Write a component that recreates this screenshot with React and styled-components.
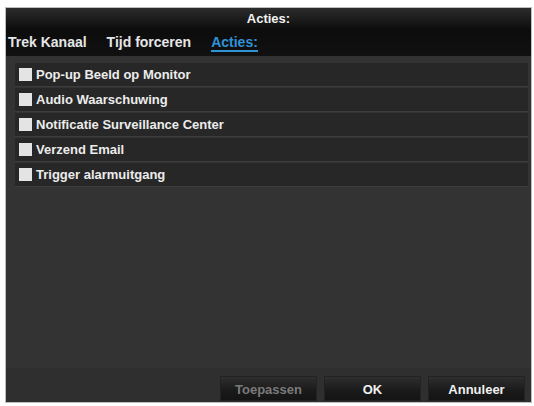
import styled, { createGlobalStyle } from 'styled-components'

const Global = createGlobalStyle`
    html, body {
        margin: 0;
        padding: 0;
        background: #ffffff;
        font-family: "Liberation Sans", Arial, sans-serif;
    }
`

const Page = styled.div`
    padding: 7px 2px 3px 5px;
`

const Dialog = styled.div`
    display: flex;
    flex-direction: column;
    width: 527px;
    height: 396px;
    background: #333333;
    border: 1px solid #bdbdbd;
    box-sizing: border-box;
`

const Header = styled.div`
    background: linear-gradient(to bottom, #2c2c2c 0%, #0c0c0c 45%, #111111 100%);
    height: 48px;
    display: flex;
    flex-direction: column;
`

const Title = styled.div`
    height: 21px;
    line-height: 22px;
    text-align: center;
    color: #f2f2f2;
    font-size: 13px;
    font-weight: bold;
`

const Tabs = styled.div`
    display: flex;
    gap: 20px;
    padding-left: 2px;
    height: 27px;
    align-items: flex-start;
`

const Tab = styled.div`
    font-size: 14px;
    font-weight: bold;
    padding-top: 5px;
    height: 16px;
    color: ${props => props.active ? '#2f93d6' : '#e6e6e6'};
    border-bottom: 2px solid ${props => props.active ? '#2f93d6' : 'transparent'};
`

const Body = styled.div`
    flex: 1;
    padding: 7px 3px 0 9px;
    display: flex;
    flex-direction: column;
    gap: 1px;
`

const Row = styled.div`
    display: flex;
    align-items: center;
    gap: 4px;
    height: 23px;
    padding-left: 4px;
    background: #272727;
    border-bottom: 1px solid #3c3c3c;
    color: #ececec;
    font-size: 13px;
    font-weight: bold;
`

const Box = styled.span`
    width: 13px;
    height: 13px;
    background: #e4e4e4;
    flex: none;
`

const Footer = styled.div`
    display: flex;
    justify-content: flex-end;
    gap: 7px;
    padding: 8px 6px 1px 0;
    background: #2f2f2f;
`

const Button = styled.div`
    width: 97px;
    height: 25px;
    line-height: 25px;
    text-align: center;
    font-size: 13px;
    font-weight: bold;
    color: ${props => props.disabled ? '#7a7a7a' : '#f0f0f0'};
    background: linear-gradient(to bottom, #2e2e2e 0%, #1a1a1a 60%, #141414 100%);
    border: 1px solid #222;
    box-sizing: border-box;
`

const actions = [
    'Pop-up Beeld op Monitor',
    'Audio Waarschuwing',
    'Notificatie Surveillance Center',
    'Verzend Email',
    'Trigger alarmuitgang',
]

function App() {
    return (
        <>
            <Global />
            <Page>
                <Dialog>
                    <Header>
                        <Title>Acties:</Title>
                        <Tabs>
                            <Tab>Trek Kanaal</Tab>
                            <Tab>Tijd forceren</Tab>
                            <Tab active>Acties:</Tab>
                        </Tabs>
                    </Header>
                    <Body>
                        {actions.map(a => (
                            <Row key={a}>
                                <Box />
                                {a}
                            </Row>
                        ))}
                    </Body>
                    <Footer>
                        <Button disabled>Toepassen</Button>
                        <Button>OK</Button>
                        <Button>Annuleer</Button>
                    </Footer>
                </Dialog>
            </Page>
        </>
    )
}

export default App
